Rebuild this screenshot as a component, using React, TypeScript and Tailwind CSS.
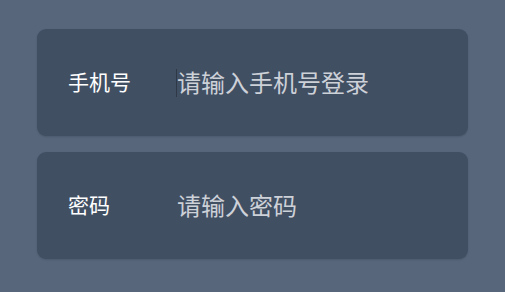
import React from "react";

const font = { fontFamily: '"Noto Sans CJK SC", "Noto Sans", sans-serif' };

function Field({ label, placeholder, caret }: { label: string; placeholder: string; caret?: boolean }) {
  return (
    <div className="flex h-[107px] items-center rounded-[9px] bg-[#414f63] pl-[31px] shadow-[0_1px_2px_rgba(0,0,0,0.12)]">
      <div className="w-[108px] shrink-0 pb-[3px] text-[21px] leading-none text-white">{label}</div>
      <div className="flex flex-1 items-center">
        {caret ? <span className="h-[28px] w-[1px] shrink-0 bg-[#2e3846]" /> : <span className="w-[1px] shrink-0" />}
        <input
          className="h-[30px] w-full bg-transparent pb-[2px] text-[24px] leading-[30px] text-[#cdd1d8] outline-none placeholder:text-[#cdd1d8]"
          style={font}
          placeholder={placeholder}
        />
      </div>
    </div>
  );
}

export default function App() {
  return (
    <div className="flex h-[292px] w-[505px] flex-col gap-[16px] bg-[#57667b] px-[37px] pt-[29px]" style={font}>
      <Field label="手机号" placeholder="请输入手机号登录" caret />
      <Field label="密码" placeholder="请输入密码" />
    </div>
  );
}
